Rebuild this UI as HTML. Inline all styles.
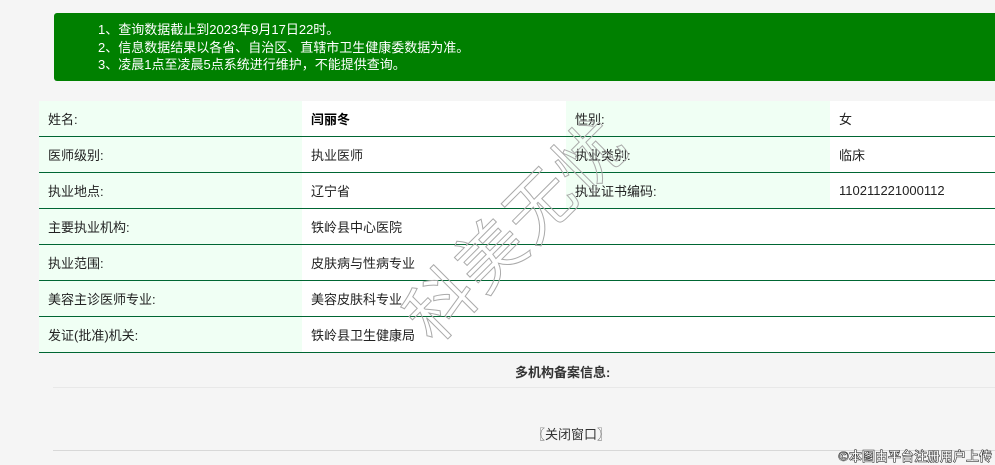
<!DOCTYPE html>
<html><head><meta charset="utf-8"><style>
body{margin:0;width:995px;height:465px;background:#f5f5f5;font-family:"Liberation Sans","Noto Sans CJK SC",sans-serif;position:relative;overflow:hidden;font-size:13px;color:#333}
.notice{position:absolute;left:54px;top:13px;width:950px;height:68px;background:#008000;border-radius:3px;color:#fff;font-size:13px;line-height:17.5px;box-sizing:border-box;padding:8px 0 0 44px}
table{position:absolute;left:39px;top:101px;border-collapse:collapse;width:956px;table-layout:fixed}
td{height:35px;border-bottom:1px solid #006633;padding:0 0 0 9px;vertical-align:middle;font-size:13px;color:#222}
td.l{background:#f0fff4}
td.v{background:#fff}
.b{font-weight:bold;color:#000}
.multi{position:absolute;left:515px;top:362px;font-weight:bold;color:#333}
.ln1{position:absolute;left:53px;top:387px;width:942px;height:1px;background:#e8e8e8}
.close{position:absolute;left:532px;top:424px;color:#333}
.ln2{position:absolute;left:53px;top:450px;width:942px;height:1px;background:#d8d8d8}
.wm{position:absolute;left:372px;top:176px;font-size:68px;color:transparent;-webkit-text-stroke:1px #aaa;transform:rotate(-45deg);transform-origin:center;white-space:nowrap;font-family:"Noto Sans CJK SC",sans-serif;letter-spacing:2px}
.cr{position:absolute;right:3px;bottom:0px;color:#fff;font-size:13px;font-weight:bold;-webkit-text-stroke:0.6px #333;font-family:"Noto Sans CJK SC",sans-serif}
</style></head><body>
<div class="notice">1、查询数据截止到2023年9月17日22时。<br>2、信息数据结果以各省、自治区、直辖市卫生健康委数据为准。<br>3、凌晨1点至凌晨5点系统进行维护，不能提供查询。</div>
<table>
<colgroup><col style="width:263px"><col style="width:264px"><col style="width:264px"><col></colgroup>
<tr><td class="l">姓名:</td><td class="v b">闫丽冬</td><td class="l">性别:</td><td class="v">女</td></tr>
<tr><td class="l">医师级别:</td><td class="v">执业医师</td><td class="l">执业类别:</td><td class="v">临床</td></tr>
<tr><td class="l">执业地点:</td><td class="v">辽宁省</td><td class="l">执业证书编码:</td><td class="v">110211221000112</td></tr>
<tr><td class="l">主要执业机构:</td><td class="v">铁岭县中心医院</td><td class="v"></td><td class="v"></td></tr>
<tr><td class="l">执业范围:</td><td class="v">皮肤病与性病专业</td><td class="v"></td><td class="v"></td></tr>
<tr><td class="l">美容主诊医师专业:</td><td class="v">美容皮肤科专业</td><td class="v"></td><td class="v"></td></tr>
<tr><td class="l">发证(批准)机关:</td><td class="v">铁岭县卫生健康局</td><td class="v"></td><td class="v"></td></tr>
</table>
<div class="multi">多机构备案信息:</div>
<div class="ln1"></div>
<div class="close">〖关闭窗口〗</div>
<div class="ln2"></div>
<div class="wm">科美无忧</div>
<div class="cr">©本图由平台注册用户上传</div>
</body></html>
